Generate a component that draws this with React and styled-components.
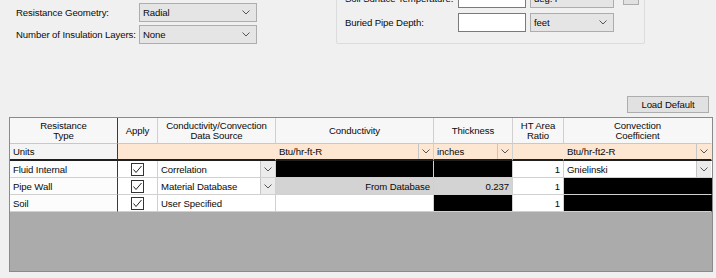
import styled, { createGlobalStyle } from 'styled-components';

const GlobalStyle = createGlobalStyle`
  body {
    margin: 0;
    background-color: #f0f0f0;
    font-family: 'Liberation Sans', Arial, sans-serif;
    font-size: 9.6px;
    letter-spacing: -0.1px;
    color: #0a0a0a;
  }
`;

const Page = styled.div`
  display: flex;
  flex-direction: column;
  width: 716px;
  height: 278px;
  overflow: hidden;
  background-color: #f0f0f0;
`;

const TopArea = styled.div`
  display: flex;
  align-items: flex-start;
  flex: 0 0 96px;
`;

const LeftForm = styled.div`
  display: grid;
  grid-template-columns: 123px 118px;
  row-gap: 3px;
  padding: 3px 0 0 16px;
  align-items: center;
`;

const Label = styled.span`
  white-space: nowrap;
`;

const Combo = styled.div`
  box-sizing: border-box;
  display: flex;
  align-items: center;
  justify-content: space-between;
  width: ${(p) => p.$width || 118}px;
  height: 19px;
  padding: 0 6px 0 3px;
  background-color: #e5e5e5;
  border: 1px solid #adadad;
`;

const GroupBox = styled.div`
  box-sizing: border-box;
  display: flex;
  flex-direction: column;
  gap: 5px;
  width: 309px;
  margin: -28px 0 0 79px;
  padding: 16px 0 0 8px;
  height: 72px;
  border: 1px solid #dcdcdc;
  border-radius: 2px;
`;

const FieldRow = styled.div`
  display: flex;
  align-items: center;
  gap: 4px;
  height: 19px;
`;

const FieldLabel = styled.span`
  width: 109px;
  white-space: nowrap;
`;

const TextBox = styled.div`
  box-sizing: border-box;
  width: 68px;
  height: 19px;
  background-color: #fff;
  border: 1px solid #7a7a7a;
`;

const SmallButton = styled.div`
  box-sizing: border-box;
  width: 16px;
  height: 16px;
  margin: -4px 0 0 5px;
  background-color: #e1e1e1;
  border: 1px solid #adadad;
`;

const ButtonRow = styled.div`
  display: flex;
  justify-content: flex-end;
  flex: 0 0 17px;
  padding-right: 7px;
  margin-bottom: 4px;
`;

const Button = styled.div`
  box-sizing: border-box;
  width: 82px;
  height: 17px;
  display: flex;
  align-items: center;
  justify-content: center;
  background-color: #e1e1e1;
  border: 1px solid #adadad;
`;

const Grid = styled.div`
  box-sizing: border-box;
  flex: 0 0 155px;
  width: 704px;
  margin-left: 9px;
  display: grid;
  grid-template-columns: 108px 40px 118px 158px 79px 51px 148px;
  grid-template-rows: 26px 17px 17px 17px 17px 59px;
  border: 1px solid #8a8a8a;
`;

const Cell = styled.div`
  box-sizing: border-box;
  display: flex;
  align-items: center;
  justify-content: ${(p) => (p.$align === 'right' ? 'flex-end' : p.$align === 'center' ? 'center' : 'flex-start')};
  padding: ${(p) => (p.$pad === false ? '0' : '0 3px')};
  min-width: 0;
  white-space: nowrap;
  overflow: hidden;
  background-color: ${(p) => p.$bg || '#fff'};
  border-right: 1px solid ${(p) => (p.$dark ? '#3a3a3a' : p.$last || p.$noRight ? 'transparent' : '#d0d0d0')};
  border-bottom: ${(p) => (p.$units ? '2px solid #1e1e1e' : '1px solid #d0d0d0')};
  grid-column: ${(p) => p.$span || 'auto'};
`;

const HeaderCell = styled(Cell)`
  justify-content: center;
  text-align: center;
  line-height: 10px;
  white-space: normal;
  background-color: #f7f7f7;
  border-bottom: 1px solid #c8c8c8;
`;

const CellText = styled.span`
  flex: 1;
  padding: 0 3px;
  text-align: ${(p) => p.$align || 'left'};
`;

const DropButton = styled.div`
  box-sizing: border-box;
  width: 15px;
  height: 100%;
  display: flex;
  align-items: center;
  justify-content: center;
  background-color: ${(p) => p.$bg || '#ebebeb'};
  border-left: 1px solid #c6c6c6;
`;

const Workspace = styled.div`
  grid-column: 1 / -1;
  background-color: #ababab;
`;

const Check = styled.div`
  box-sizing: border-box;
  width: 13px;
  height: 13px;
  border: 1px solid #333;
  background-color: #fff;
  display: flex;
  align-items: center;
  justify-content: center;
`;

function Chevron() {
  return (
    <svg width="8" height="5" viewBox="0 0 8 5">
      <polyline points="0.5,0.5 4,4 7.5,0.5" fill="none" stroke="#555" strokeWidth="1" />
    </svg>
  );
}

function CheckBox() {
  return (
    <Check>
      <svg width="11" height="11" viewBox="0 0 11 11">
        <polyline points="1.5,5.5 4,8.5 9.5,2" fill="none" stroke="#222" strokeWidth="1" />
      </svg>
    </Check>
  );
}

const UNITS = '#fde6d2';
const DB_GRAY = '#d3d3d3';

export default function App() {
  return (
    <Page>
      <GlobalStyle />
      <TopArea>
        <LeftForm>
          <Label>Resistance Geometry:</Label>
          <Combo>
            Radial <Chevron />
          </Combo>
          <Label>Number of Insulation Layers:</Label>
          <Combo>
            None <Chevron />
          </Combo>
        </LeftForm>
        <GroupBox>
          <FieldRow>
            <FieldLabel>Soil Surface Temperature:</FieldLabel>
            <TextBox />
            <Combo $width={84}>
              deg. F <Chevron />
            </Combo>
            <SmallButton />
          </FieldRow>
          <FieldRow>
            <FieldLabel>Buried Pipe Depth:</FieldLabel>
            <TextBox />
            <Combo $width={84}>
              feet <Chevron />
            </Combo>
          </FieldRow>
        </GroupBox>
      </TopArea>

      <ButtonRow>
        <Button>Load Default</Button>
      </ButtonRow>

      <Grid>
        <HeaderCell $dark>Resistance<br />Type</HeaderCell>
        <HeaderCell>Apply</HeaderCell>
        <HeaderCell>Conductivity/Convection<br />Data Source</HeaderCell>
        <HeaderCell>Conductivity</HeaderCell>
        <HeaderCell>Thickness</HeaderCell>
        <HeaderCell>HT Area<br />Ratio</HeaderCell>
        <HeaderCell $last>Convection<br />Coefficient</HeaderCell>

        <Cell $dark $units $bg="#f4f4f4">Units</Cell>
        <Cell $units $span="span 2" $noRight $bg={UNITS} />
        <Cell $units $bg={UNITS} $pad={false}>
          <CellText>Btu/hr-ft-R</CellText>
          <DropButton $bg={UNITS}><Chevron /></DropButton>
        </Cell>
        <Cell $units $bg={UNITS} $pad={false}>
          <CellText>inches</CellText>
          <DropButton $bg={UNITS}><Chevron /></DropButton>
        </Cell>
        <Cell $units $noRight $bg={UNITS} />
        <Cell $units $last $bg={UNITS} $pad={false}>
          <CellText>Btu/hr-ft2-R</CellText>
          <DropButton $bg={UNITS}><Chevron /></DropButton>
        </Cell>

        <Cell $dark $bg="#fcfcfc">Fluid Internal</Cell>
        <Cell $align="center"><CheckBox /></Cell>
        <Cell $pad={false}>
          <CellText>Correlation</CellText>
          <DropButton><Chevron /></DropButton>
        </Cell>
        <Cell $bg="#000" />
        <Cell $bg="#000" />
        <Cell $align="right">1</Cell>
        <Cell $last $pad={false}>
          <CellText>Gnielinski</CellText>
          <DropButton><Chevron /></DropButton>
        </Cell>

        <Cell $dark $bg="#fcfcfc">Pipe Wall</Cell>
        <Cell $align="center"><CheckBox /></Cell>
        <Cell $pad={false}>
          <CellText>Material Database</CellText>
          <DropButton><Chevron /></DropButton>
        </Cell>
        <Cell $align="right" $bg={DB_GRAY}>From Database</Cell>
        <Cell $align="right" $bg={DB_GRAY}>0.237</Cell>
        <Cell $align="right">1</Cell>
        <Cell $last $bg="#000" />

        <Cell $dark $bg="#fcfcfc">Soil</Cell>
        <Cell $align="center"><CheckBox /></Cell>
        <Cell>User Specified</Cell>
        <Cell />
        <Cell $bg="#000" />
        <Cell $align="right">1</Cell>
        <Cell $last $bg="#000" />

        <Workspace />
      </Grid>
    </Page>
  );
}
